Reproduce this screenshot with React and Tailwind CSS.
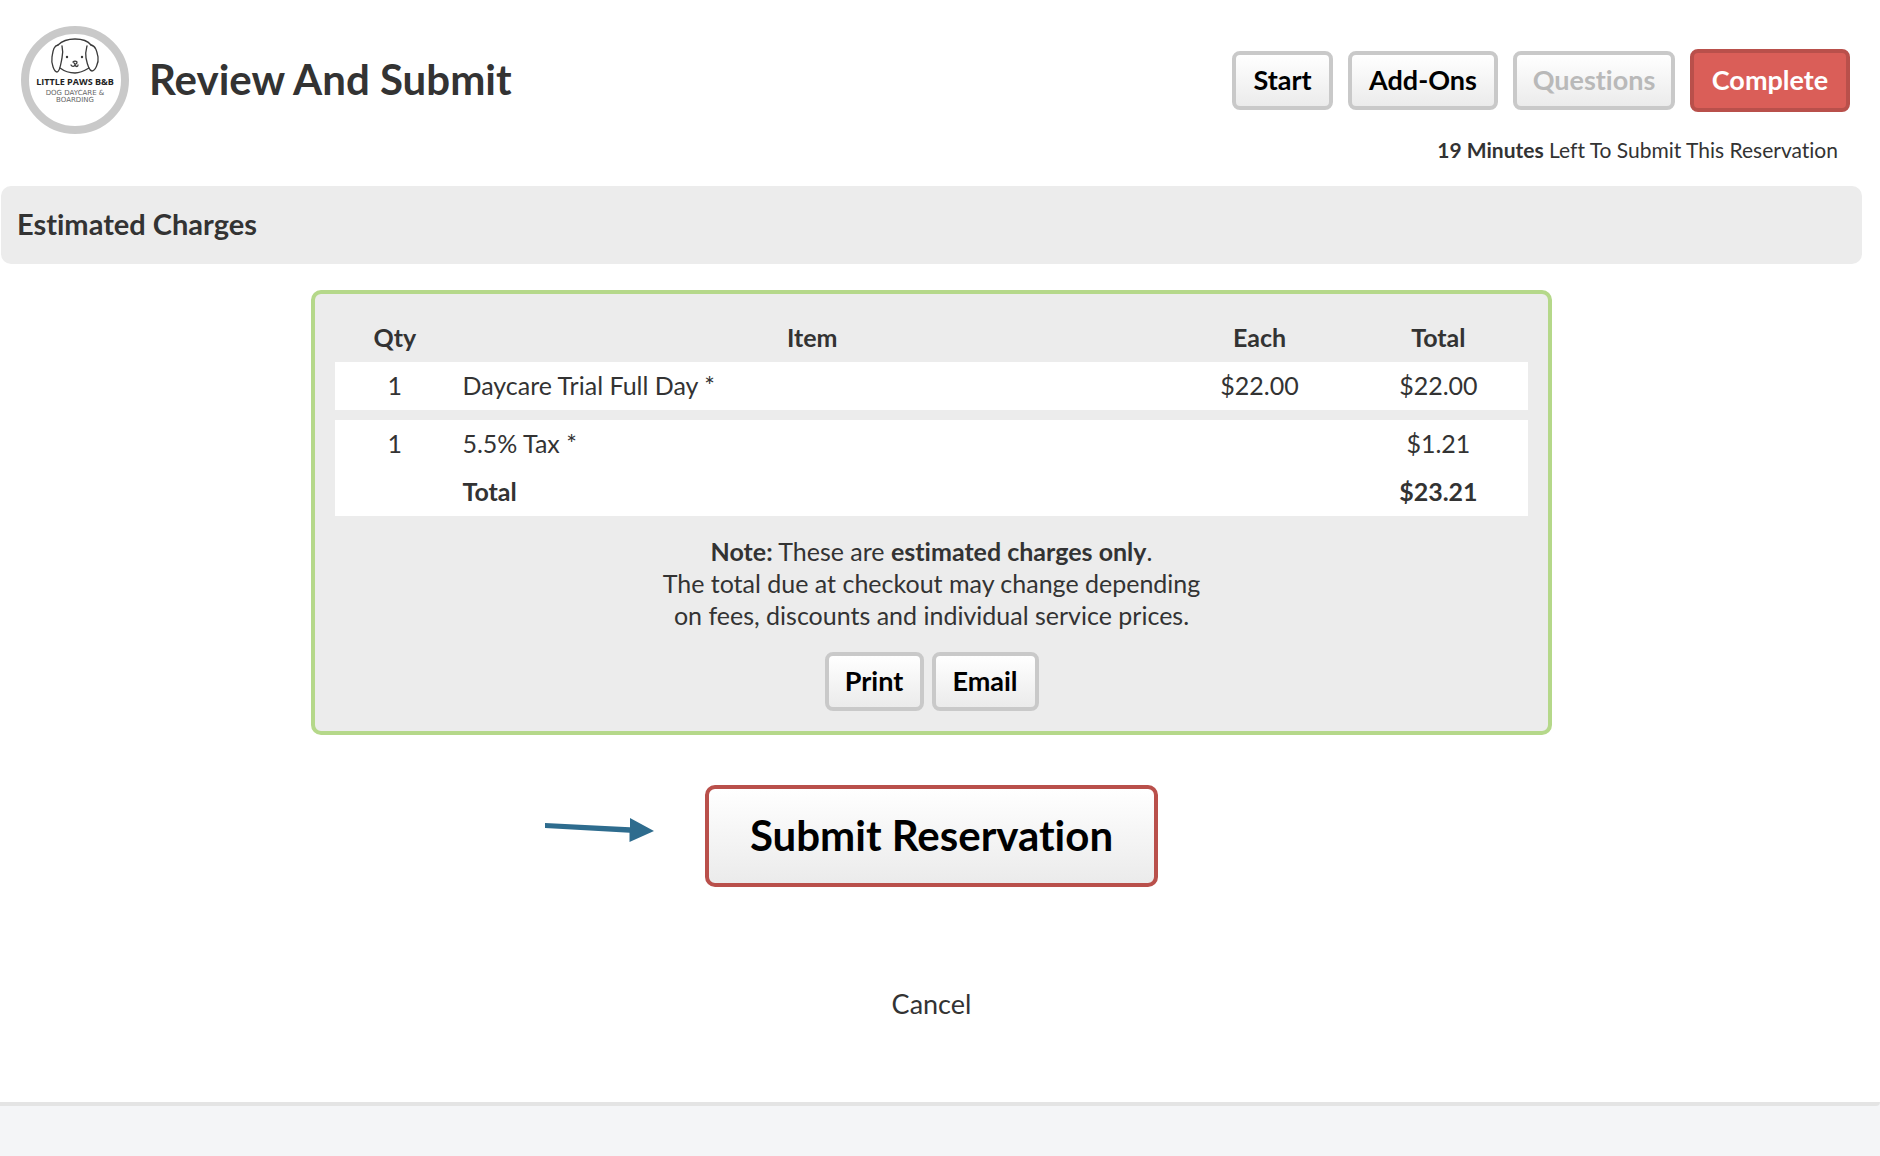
import React from 'react';
import clsx from 'clsx';

const steps = [
  { label: 'Start' },
  { label: 'Add-Ons' },
  { label: 'Questions', disabled: true },
  { label: 'Complete', active: true },
];

const charges = [{ qty: 1, item: 'Daycare Trial Full Day *', each: '$22.00', total: '$22.00' }];

const taxes = [{ qty: 1, item: '5.5% Tax *', total: '$1.21' }];

// ===================================================================
// LOGO
// ===================================================================
const Logo = () => (
  <div className="size-[108px] shrink-0 rounded-full border-8 border-[#c9c9c9] bg-white">
    <svg viewBox="0 0 92 92" className="size-full" role="img" aria-label="Little Paws B&B logo">
      <g fill="none" stroke="#3a3a3a" strokeWidth="1.3" strokeLinecap="round" strokeLinejoin="round">
        <path d="M29 11 C33 7 38 5 46 5 C54 5 59 7 62 11" />
        <path d="M29 11 C24 12 24 18 23 23 C22 29 25 38 28 38 C31 38 32 29 33 24 C34 19 34 16 33 12" />
        <path d="M62 11 C67 12 68 18 69 23 C70 29 66 37 63 37 C60 37 58 29 57 24 C56 19 57 16 58 12" />
        <path d="M31 34 C35 37 40 39 46 39 C51 39 55 37 60 34" />
        <path d="M44 28 C45 27 47 27 48 28 C48 30 46 31 45 29 M46 30 C46 33 43 33 42 31 M46 31 C47 33 49 33 49 31" />
      </g>
      <circle cx="38" cy="23" r="1.2" fill="#3a3a3a" />
      <circle cx="53" cy="23" r="1.2" fill="#3a3a3a" />
      <text x="46" y="51" textAnchor="middle" className="fill-[#222] font-['Open_Sans',sans-serif] text-[9px] font-bold">
        LITTLE PAWS B&amp;B
      </text>
      <text x="46" y="61" textAnchor="middle" className="fill-[#666] font-['DejaVu_Sans',sans-serif] text-[7px]">
        DOG DAYCARE &amp;
      </text>
      <text x="46" y="68" textAnchor="middle" className="fill-[#666] font-['DejaVu_Sans',sans-serif] text-[7px]">
        BOARDING
      </text>
    </svg>
  </div>
);

// ===================================================================
// BUTTONS
// ===================================================================
const Button = ({ active, className, children, ...props }) => (
  <button
    type="button"
    className={clsx(
      'rounded-lg border-4 pb-0.5 text-[27px] leading-8 font-bold',
      active
        ? 'h-[63px] border-[#b9504b] bg-[#da5e58] text-white'
        : 'h-[59px] border-[#c9c9c9] bg-linear-to-b from-white to-[#ebebeb] text-black disabled:text-[#b9b9b9]',
      className
    )}
    {...props}
  >
    {children}
  </button>
);

const stepWidths = {
  Start: 'w-[101px]',
  'Add-Ons': 'w-[150px]',
  Questions: 'w-[162px]',
  Complete: 'w-[160px]',
};

// ===================================================================
// HEADER
// ===================================================================
const Header = () => (
  <header className="flex items-start justify-between pt-[26px] pl-5">
    <div className="flex items-center gap-5">
      <Logo />
      <h1 className="pb-0.5 text-[42px] leading-12 font-bold">Review And Submit</h1>
    </div>
    <div className="flex flex-col items-end gap-[22px] pt-[23px] pr-3">
      <nav className="flex items-center gap-[15px]">
        {steps.map((step) => (
          <Button key={step.label} active={step.active} disabled={step.disabled} className={stepWidths[step.label]}>
            {step.label}
          </Button>
        ))}
      </nav>
      <p className="pr-3 text-[21px] leading-8">
        <b>19 Minutes</b> Left To Submit This Reservation
      </p>
    </div>
  </header>
);

// ===================================================================
// CHARGES TABLE
// ===================================================================
const ChargeRow = ({ row }) => (
  <tr className="h-12 bg-white">
    <td className="pb-0.5">{row.qty}</td>
    <td className="px-2 pb-0.5 text-left">{row.item}</td>
    <td className="pb-0.5">{row.each}</td>
    <td className="pb-0.5">{row.total}</td>
  </tr>
);

const ChargesCard = () => (
  <section className="mx-auto mt-[26px] w-2/3 rounded-[10px] border-4 border-[#b5d88a] bg-[#ececec] p-5 text-center text-[25px] leading-8">
    <table className="w-full table-fixed">
      <thead>
        <tr className="h-12">
          <th className="w-[10%] pb-0.5">Qty</th>
          <th className="w-[60%] pb-0.5">Item</th>
          <th className="w-[15%] pb-0.5">Each</th>
          <th className="w-[15%] pb-0.5">Total</th>
        </tr>
      </thead>
      <tbody>
        {charges.map((row) => (
          <ChargeRow key={row.item} row={row} />
        ))}
      </tbody>
      <tbody>
        <tr className="h-[10px]">
          <td colSpan={4} className="p-0"></td>
        </tr>
        {taxes.map((row) => (
          <ChargeRow key={row.item} row={row} />
        ))}
        <tr className="h-12 bg-white font-bold">
          <td></td>
          <td className="px-2 pb-0.5 text-left">Total</td>
          <td></td>
          <td className="pb-0.5">$23.21</td>
        </tr>
      </tbody>
    </table>
    <p className="mt-[19px]">
      <b>Note:</b> These are <b>estimated charges only</b>.
      <br />
      The total due at checkout may change depending
      <br />
      on fees, discounts and individual service prices.
    </p>
    <div className="mt-[21px] flex justify-center gap-2">
      <Button className="w-[99px]">Print</Button>
      <Button className="w-[107px]">Email</Button>
    </div>
  </section>
);

export default function App() {
  return (
    <div className="flex min-h-screen flex-col bg-[#f4f5f7] font-[Lato,sans-serif] text-[#333] [font-variant-ligatures:none]">
      <main className="rounded-br border-b-4 border-[#e4e4e4] bg-white pr-[18px] pb-20 pl-px">
        <Header />
        <h2 className="mt-5 rounded-[10px] bg-[#ececec] px-4 pt-[22px] pb-6 text-[29px] leading-8 font-bold">
          Estimated Charges
        </h2>
        <ChargesCard />
        <div className="mt-[50px] flex justify-center">
          <div className="relative">
            <svg viewBox="0 0 110 26" className="absolute top-8 right-full mr-[50px] h-[26px] w-[110px]" aria-hidden="true">
              <path d="M0 6 L85 10.3 V1 L109 14 L84.500 25 V15.800 L0 11 Z" fill="#2e6c8e" />
            </svg>
            <button
              type="button"
              className="h-[102px] w-[453px] rounded-[10px] border-4 border-[#b9504b] bg-linear-to-b from-white to-[#ebebeb] pb-0.5 text-[42px] leading-12 font-bold text-black"
            >
              Submit Reservation
            </button>
          </div>
        </div>
        <div className="mt-[99px] flex justify-center">
          <a href="#cancel" className="text-[27px] leading-9">
            Cancel
          </a>
        </div>
      </main>
    </div>
  );
}
